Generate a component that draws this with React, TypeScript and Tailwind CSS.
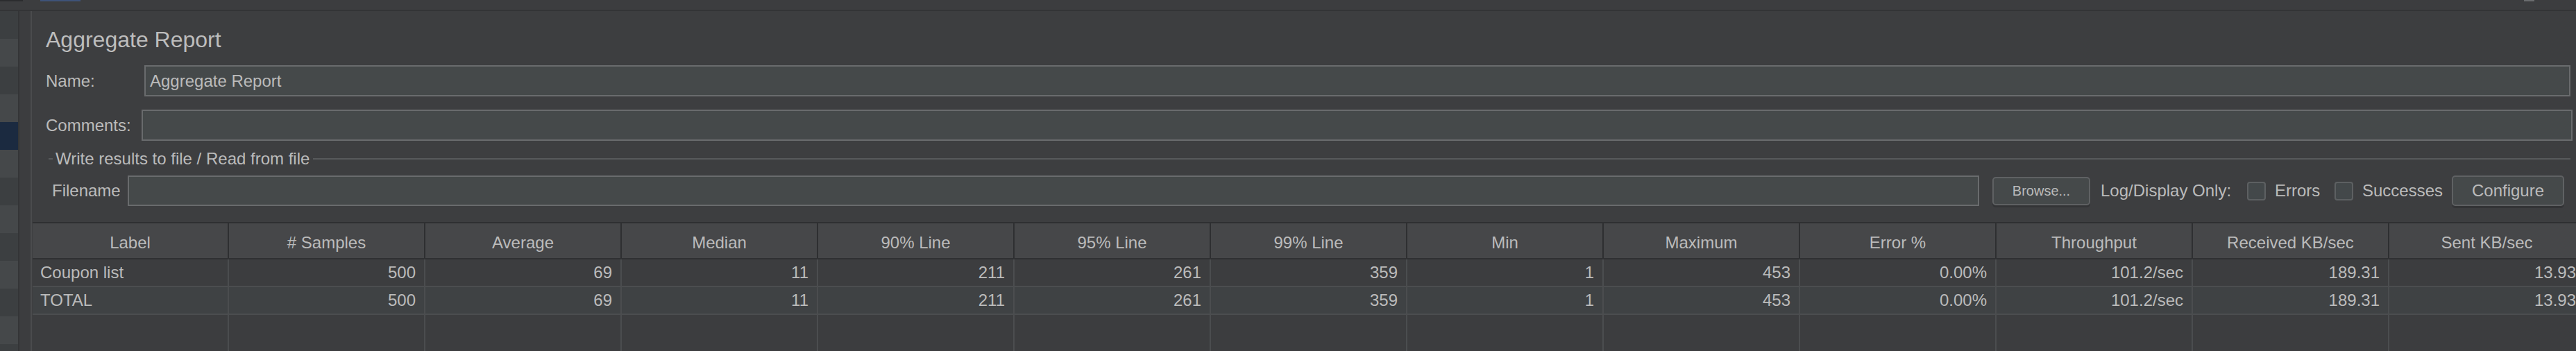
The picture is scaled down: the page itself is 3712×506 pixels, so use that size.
import React from "react";

type Row = { label: string; values: string[] };

const columns: string[] = [
  "Label",
  "# Samples",
  "Average",
  "Median",
  "90% Line",
  "95% Line",
  "99% Line",
  "Min",
  "Maximum",
  "Error %",
  "Throughput",
  "Received KB/sec",
  "Sent KB/sec",
];

const rows: Row[] = [
  {
    label: "Coupon list",
    values: ["500", "69", "11", "211", "261", "359", "1", "453", "0.00%", "101.2/sec", "189.31", "13.93"],
  },
  {
    label: "TOTAL",
    values: ["500", "69", "11", "211", "261", "359", "1", "453", "0.00%", "101.2/sec", "189.31", "13.93"],
  },
];

// left tree strip: 40px rows, alternating, one selected
const sideRows: string[] = [
  "bg-[#3c3f41]",
  "bg-[#45484a]",
  "bg-[#3c3f41]",
  "bg-[#45484a]",
  "bg-[#1b2a40]",
  "bg-[#45484a]",
  "bg-[#3c3f41]",
  "bg-[#45484a]",
  "bg-[#3c3f41]",
  "bg-[#45484a]",
  "bg-[#3c3f41]",
  "bg-[#45484a]",
  "bg-[#3c3f41]",
];

const Checkbox: React.FC = () => (
  <div className="w-[27px] h-[27px] shrink-0 rounded-[4px] border-2 border-[#5d6062] bg-[#43484a]" />
);

const App: React.FC = () => {
  return (
    <div className="w-[3712px] h-[506px] overflow-hidden bg-[#3d3e40] text-[#bbbbbb] font-['Liberation_Sans',Arial,sans-serif] flex flex-col">
      {/* toolbar remains */}
      <div className="h-[16px] shrink-0 bg-[#3c3d3f] border-b-2 border-[#333436] flex">
        <div className="w-[33px] h-[2px] bg-[#2b2c2e]" />
        <div className="w-[58px] ml-[25px] h-[2px] bg-[#3e5379]" />
        <div className="w-[15px] ml-[3521px] h-[2px] bg-[#6a6c6e]" />
      </div>

      <div className="flex flex-1 min-h-0">
        <div className="w-[26px] shrink-0 flex flex-col">
          {sideRows.map((c, i) => (
            <div key={i} className={`h-[40px] shrink-0 ${c}`} />
          ))}
        </div>
        <div className="w-[2px] shrink-0 bg-[#343537]" />
        <div className="w-[16px] shrink-0 bg-[#3c3d3f]" />
        <div className="w-[2px] shrink-0 bg-[#4a4b4d]" />

        <div className="flex-1 flex flex-col min-w-0">
          <div className="mt-[25px] pl-[20px] h-[32px] text-[32px] leading-[32px] text-[#bdbdbd] whitespace-nowrap">
            Aggregate Report
          </div>

          <div className="mt-[21px] pl-[20px] h-[45px] flex items-center text-[24px] leading-[24px]">
            <div className="w-[142px] shrink-0">Name:</div>
            <div className="flex-1 h-full mr-[8px] border-2 border-[#696b6d] bg-[#45494a] flex items-center pl-[6px]">
              Aggregate Report
            </div>
          </div>

          <div className="mt-[19px] pl-[20px] h-[45px] flex items-center text-[24px] leading-[24px]">
            <div className="w-[138px] shrink-0">Comments:</div>
            <div className="flex-1 h-full mr-[5px] border-2 border-[#696b6d] bg-[#45494a]" />
          </div>

          <div className="mt-[14px] pl-[24px] h-[24px] flex items-center text-[24px] leading-[24px]">
            <div className="w-[6px] h-[2px] bg-[#57595b] shrink-0" />
            <div className="ml-[4px] whitespace-nowrap">Write results to file / Read from file</div>
            <div className="flex-1 ml-[5px] mr-[8px] h-[2px] bg-[#57595b]" />
          </div>

          <div className="mt-[12px] pl-[29px] h-[44px] flex items-center text-[24px] leading-[24px] whitespace-nowrap">
            <div className="w-[109px] shrink-0">Filename</div>
            <div className="w-[2668px] shrink-0 h-full border-2 border-[#696b6d] bg-[#45494a]" />
            <div className="ml-[19px] w-[141px] h-[41px] shrink-0 rounded-[5px] border-2 border-[#5f6163] bg-[#45494a] shadow-[0_3px_0_#333436] flex items-center justify-center text-[20px] leading-[20px]">
              Browse...
            </div>
            <div className="ml-[15px] w-[211px] shrink-0">Log/Display Only:</div>
            <Checkbox />
            <div className="ml-[13px] w-[86px] shrink-0">Errors</div>
            <Checkbox />
            <div className="ml-[13px] w-[129px] shrink-0">Successes</div>
            <div className="w-[162px] h-full shrink-0 rounded-[5px] border-2 border-[#5f6163] bg-[#45494a] shadow-[0_3px_0_#333436] flex items-center justify-center">
              Configure
            </div>
          </div>

          {/* results table */}
          <div className="mt-[23px] ml-[1px] flex flex-col flex-1 text-[24px] leading-[24px] whitespace-nowrap">
            <div className="flex h-[54px] shrink-0 border-t-2 border-b-2 border-[#2f3032] bg-[#464749]">
              {columns.map((c) => (
                <div
                  key={c}
                  className="w-[283px] shrink-0 border-r-2 border-[#2e2f31] flex items-center justify-center pt-[5px]"
                >
                  {c}
                </div>
              ))}
            </div>
            {rows.map((r, i) => (
              <div
                key={r.label}
                className={`flex h-[40px] shrink-0 border-b-2 border-[#4b4d4f] ${i === 1 ? "bg-[#3f4244]" : "bg-[#3c3d3f]"}`}
              >
                <div className="w-[283px] shrink-0 border-r-2 border-[#4b4d4f] flex items-center pl-[11px]">
                  {r.label}
                </div>
                {r.values.map((v, j) => (
                  <div
                    key={j}
                    className="w-[283px] shrink-0 border-r-2 border-[#4b4d4f] flex items-center justify-end pr-[12px]"
                  >
                    {v}
                  </div>
                ))}
              </div>
            ))}
            <div className="flex flex-1 bg-[#3c3d3f]">
              {columns.map((c) => (
                <div key={c} className="w-[283px] shrink-0 border-r-2 border-[#4b4d4f]" />
              ))}
            </div>
          </div>
        </div>
      </div>
    </div>
  );
};

export default App;
